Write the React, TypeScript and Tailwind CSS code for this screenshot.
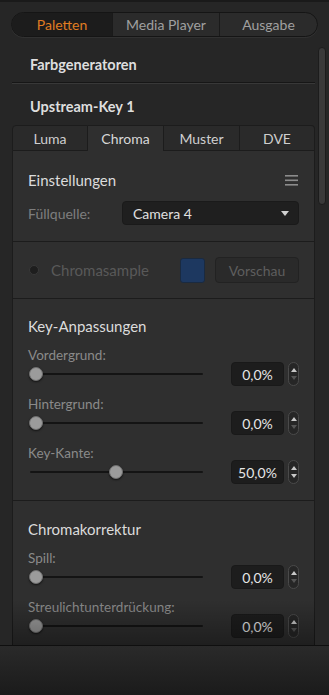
import React from 'react'

const font = { fontFamily: 'Lato, "Open Sans", "Liberation Sans", sans-serif' }

function Spinner({ downActive }: { downActive: boolean }) {
  return (
    <div className="w-[11px] h-[24px] rounded-full border border-[#4a4a4a] bg-[#262626] flex flex-col items-center justify-center gap-[4px]">
      <svg width="6" height="4" viewBox="0 0 6 4"><path d="M3 0 L6 4 L0 4 Z" fill="#c8c8c8" /></svg>
      <svg width="6" height="4" viewBox="0 0 6 4"><path d="M0 0 L6 0 L3 4 Z" fill={downActive ? '#c8c8c8' : '#555555'} /></svg>
    </div>
  )
}

function SliderRow({ label, value, pos }: { label: string; value: string; pos: number }) {
  return (
    <div className="flex flex-col">
      <div className="h-[14px] leading-[14px] text-[13.5px] text-[#8a8a8a]">{label}</div>
      <div className="h-[24px] flex items-center">
        <div className="relative w-[174px] h-[24px] ml-[1px]">
          <div className="absolute left-[1px] right-0 top-[11px] h-[2px] rounded-full bg-[#141414]" />
          <div
            className="absolute top-[5px] w-[14px] h-[14px] rounded-full bg-[#9b9b9b] border border-[#6e6e6e] shadow-[0_1px_2px_rgba(0,0,0,0.6)]"
            style={{ left: pos }}
          />
        </div>
        <div className="ml-[28px] w-[53px] h-[24px] rounded-[4px] bg-[#1d1d1d] border border-[#191919] flex items-center justify-center text-[14px] text-[#e6e6e6]">
          {value}
        </div>
        <div className="ml-[4px]">
          <Spinner downActive={value === '50,0%'} />
        </div>
      </div>
    </div>
  )
}

export default function App() {
  return (
    <div className="w-[329px] h-[695px] bg-[#262626] flex flex-col overflow-hidden select-none" style={font}>
      <div className="h-[2px] bg-[#1a1a1a]" />
      {/* top segmented control */}
      <div className="mt-[10px] ml-[11px] w-[307px] h-[25px] rounded-full border border-[#151515] bg-[#2b2b2b] flex overflow-hidden text-[14px] shadow-[0_1px_0_rgba(255,255,255,0.05)]">
        <div className="w-[100px] flex items-center justify-center bg-[#1c1c1c] text-[#e07d22]">Paletten</div>
        <div className="w-[107px] flex items-center justify-center border-l border-[#1a1a1a] text-[#a0a0a0]">Media Player</div>
        <div className="flex-1 flex items-center justify-center border-l border-[#1a1a1a] text-[#a0a0a0]">Ausgabe</div>
      </div>

      <div className="flex flex-1 min-h-0 mt-[10px]">
        <div className="relative ml-[12px] w-[303px] flex flex-col">
          <div className="h-[35px] pt-[9px] pl-[18px] text-[14.5px] font-bold text-[#dedede] leading-[18px]">Farbgeneratoren</div>
          <div className="h-[1px] bg-[#161616]" />
          <div className="h-[1px] bg-[#383838]" />
          <div className="h-[41px] pt-[14px] pl-[18px] text-[14.5px] font-bold text-[#dedede] leading-[18px]">Upstream-Key 1</div>

          {/* tabs */}
          <div className="h-[26px] flex text-[14px]">
            <div className="w-[76px] flex items-center justify-center bg-[#2a2a2a] border border-[#1c1c1c] rounded-tl-[4px] text-[#cfcfcf]">Luma</div>
            <div className="w-[75px] flex items-center justify-center bg-[#2f2f2f] border-t border-[#1c1c1c] text-[#d8d8d8]">Chroma</div>
            <div className="w-[77px] flex items-center justify-center bg-[#2a2a2a] border border-[#1c1c1c] text-[#cfcfcf]">Muster</div>
            <div className="flex-1 flex items-center justify-center bg-[#2a2a2a] border border-l-0 border-[#1c1c1c] rounded-tr-[4px] text-[#cfcfcf]">DVE</div>
          </div>

          <div className="flex-1 bg-[#2f2f2f] border-x border-[#1c1c1c] flex flex-col">
            {/* Einstellungen */}
            <div className="h-[90px] px-[15px] pt-[20px] flex flex-col">
              <div className="flex items-center justify-between h-[18px]">
                <span className="text-[15px] text-[#dcdcdc]">Einstellungen</span>
                <svg width="13" height="11" viewBox="0 0 13 11" className="mr-[1px]">
                  <rect x="0" y="0" width="13" height="1.6" fill="#8c8c8c" />
                  <rect x="0" y="4.5" width="13" height="1.6" fill="#8c8c8c" />
                  <rect x="0" y="9" width="13" height="1.6" fill="#8c8c8c" />
                </svg>
              </div>
              <div className="mt-[12px] flex items-center h-[24px]">
                <span className="w-[94px] text-[14px] text-[#7e7e7e]">Füllquelle:</span>
                <div className="w-[177px] h-[24px] rounded-[4px] bg-[#1f1f1f] border border-[#1a1a1a] flex items-center justify-between pl-[10px] pr-[9px]">
                  <span className="text-[14px] text-[#e0e0e0]">Camera 4</span>
                  <svg width="8" height="5" viewBox="0 0 8 5"><path d="M0 0 L8 0 L4 5 Z" fill="#d0d0d0" /></svg>
                </div>
              </div>
            </div>
            <div className="h-[1px] bg-[#1c1c1c]" />

            {/* Chromasample */}
            <div className="h-[56px] px-[15px] flex items-center">
              <div className="ml-[1px] w-[10px] h-[10px] rounded-full bg-[#1e1e1e] border border-[#383838]" />
              <span className="ml-[12px] w-[129px] text-[15px] text-[#595959]">Chromasample</span>
              <div className="w-[25px] h-[25px] rounded-[3px] bg-[#1d3860] border border-[#1a2a40]" />
              <div className="ml-[10px] w-[84px] h-[26px] rounded-[4px] bg-[#2a2a2a] border border-[#222222] flex items-center justify-center text-[14px] text-[#5e5e5e]">Vorschau</div>
            </div>
            <div className="h-[1px] bg-[#1c1c1c]" />

            {/* Key-Anpassungen */}
            <div className="h-[201px] px-[15px] pt-[18px] flex flex-col">
              <div className="h-[18px] leading-[18px] text-[15px] text-[#dcdcdc]">Key-Anpassungen</div>
              <div className="mt-[13px] flex flex-col gap-[11px]">
                <SliderRow label="Vordergrund:" value="0,0%" pos={0} />
                <SliderRow label="Hintergrund:" value="0,0%" pos={0} />
                <SliderRow label="Key-Kante:" value="50,0%" pos={80} />
              </div>
            </div>
            <div className="h-[1px] bg-[#1c1c1c]" />

            {/* Chromakorrektur */}
            <div className="flex-1 px-[15px] pt-[19px] flex flex-col">
              <div className="h-[18px] leading-[18px] text-[15px] text-[#dcdcdc]">Chromakorrektur</div>
              <div className="mt-[13px] flex flex-col gap-[11px]">
                <SliderRow label="Spill:" value="0,0%" pos={0} />
                <SliderRow label="Streulichtunterdrückung:" value="0,0%" pos={0} />
              </div>
            </div>
          </div>
          <div className="pointer-events-none absolute left-0 right-0 bottom-0 h-[45px] bg-gradient-to-b from-[rgba(0,0,0,0)] to-[rgba(0,0,0,0.35)]" />
        </div>

        {/* scrollbar */}
        <div className="ml-[3px] w-[10px] flex flex-col">
          <div className="w-[8px] h-[158px] rounded-full bg-[#3a3a3a] border border-[#1c1c1c]" />
        </div>
      </div>

      {/* footer */}
      <div className="h-[1px] bg-[#0f0f0f]" />
      <div className="h-[49px] bg-gradient-to-b from-[#2a2a2a] to-[#1b1b1b]" />
    </div>
  )
}
